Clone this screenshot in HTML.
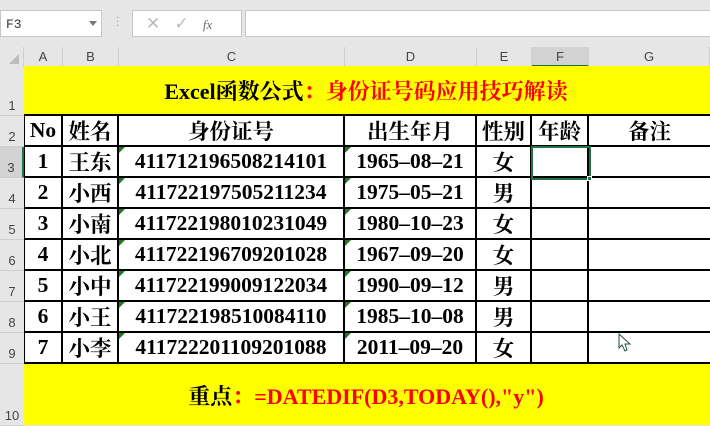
<!DOCTYPE html>
<html><head><meta charset="utf-8"><style>
*{margin:0;padding:0;box-sizing:border-box}
body{width:710px;height:426px;background:#e6e6e6;position:relative;overflow:hidden;font-family:"Liberation Serif","Noto Serif CJK SC",serif}
.a{position:absolute}
.box{background:#fff;border:1px solid #c6c6c6}
.ch{position:absolute;top:47px;height:20px;font:13px "Liberation Sans",sans-serif;color:#444;text-align:center;line-height:20px;border-right:1px solid #cfcfcf}
.rh{position:absolute;left:0;width:24px;font:13px "Liberation Sans",sans-serif;color:#444;text-align:center;border-bottom:1px solid #cfcfcf;display:flex;align-items:flex-end;justify-content:center;padding-bottom:2px}
.c{position:absolute;display:flex;align-items:center;justify-content:center;font-weight:bold;font-size:21.5px;color:#000;border-right:2px solid #000;border-bottom:2px solid #000;background:#fff}
.tri{position:absolute;left:0;top:0;width:0;height:0;border-top:6px solid #1e7a1e;border-right:6px solid transparent}
</style></head><body>
<div class="a box" style="left:0;top:10px;width:102px;height:27px;font:13px 'Liberation Mono',monospace;padding:6px 5px;color:#333">F3</div>
<div class="a" style="left:89px;top:21px;border-top:5px solid #777;border-left:4px solid transparent;border-right:4px solid transparent"></div>
<div class="a" style="left:116px;top:17px;color:#999;font-size:10px;line-height:4px">·<br>·<br>·</div>
<div class="a box" style="left:132px;top:10px;width:110px;height:27px;color:#bbb;font:17px 'Liberation Sans',sans-serif;padding:3px 0 0 13px">✕ &nbsp;&nbsp;✓&nbsp;&nbsp; <i style="font:italic 13px 'Liberation Serif',serif;color:#7a6a6a">fx</i></div>
<div class="a box" style="left:245px;top:10px;width:470px;height:27px"></div>
<div class="a" style="left:0;top:47px;width:24px;height:20px;border-right:1px solid #cfcfcf"></div>
<div class="a" style="left:9px;top:54px;border-bottom:10px solid #bbb;border-left:10px solid transparent"></div>
<div class="ch" style="left:24px;width:39px">A</div>
<div class="ch" style="left:63px;width:56px">B</div>
<div class="ch" style="left:119px;width:226px">C</div>
<div class="ch" style="left:345px;width:132px">D</div>
<div class="ch" style="left:477px;width:55px">E</div>
<div class="ch" style="left:532px;width:57px;background:#d2d2d2;border-bottom:2px solid #217346">F</div>
<div class="ch" style="left:589px;width:121px">G</div>
<div class="rh" style="top:66px;height:50px">1</div>
<div class="rh" style="top:116px;height:31px">2</div>
<div class="rh" style="top:147px;height:31px;background:#d2d2d2;border-right:2px solid #217346">3</div>
<div class="rh" style="top:178px;height:31px">4</div>
<div class="rh" style="top:209px;height:31px">5</div>
<div class="rh" style="top:240px;height:31px">6</div>
<div class="rh" style="top:271px;height:31px">7</div>
<div class="rh" style="top:302px;height:31px">8</div>
<div class="rh" style="top:333px;height:31px">9</div>
<div class="rh" style="top:364px;height:62px">10</div>
<div class="a" style="left:24px;top:66px;width:686px;height:50px;background:#ff0;border-bottom:2px solid #000;display:flex;align-items:center;justify-content:center;font-weight:bold;font-size:22px;padding-right:2px">Excel函数公式<span style="color:#f00">：身份证号码应用技巧解读</span></div>
<div class="a" style="left:24px;top:364px;width:686px;height:61px;background:#ff0;display:flex;align-items:center;justify-content:center;font-weight:bold;font-size:22px;padding-top:2px;padding-right:2px">重点<span style="color:#f00">：=DATEDIF(D3,TODAY(),"y")</span></div>
<div id="g"></div>
<script>
var cols=[24,63,119,345,477,532,589,712];
var rows=[["No","姓名","身份证号","出生年月","性别","年龄","备注"],
["1","王东","411712196508214101","1965–08–21","女","",""],
["2","小西","411722197505211234","1975–05–21","男","",""],
["3","小南","411722198010231049","1980–10–23","女","",""],
["4","小北","411722196709201028","1967–09–20","女","",""],
["5","小中","411722199009122034","1990–09–12","男","",""],
["6","小王","411722198510084110","1985–10–08","男","",""],
["7","小李","411722201109201088","2011–09–20","女","",""]];
var h="";
for(var r=0;r<8;r++){var t=116+r*31;for(var c=0;c<7;c++){
var x=cols[c],w=cols[c+1]-x;
h+='<div class="c" style="left:'+x+'px;top:'+t+'px;width:'+w+'px;height:31px;'+(c==0?'border-left:1px solid #000;':'')+'">'+((r>0&&(c==2||c==3))?'<span class="tri"></span>':'')+rows[r][c]+'</div>';}}
document.getElementById('g').innerHTML=h;
</script>
<div class="a" style="left:531px;top:146px;width:60px;height:34px;border:2px solid #217346"></div>
<div class="a" style="left:587px;top:176px;width:5px;height:5px;background:#217346;border:1px solid #fff"></div>
<svg class="a" style="left:618px;top:333px" width="14" height="20"><path d="M1 1 L1 15 L4 12 L7 18 L9 17 L7 11 L12 11 Z" fill="#fff" stroke="#1f4f3a" stroke-width="1"/></svg>
</body></html>
